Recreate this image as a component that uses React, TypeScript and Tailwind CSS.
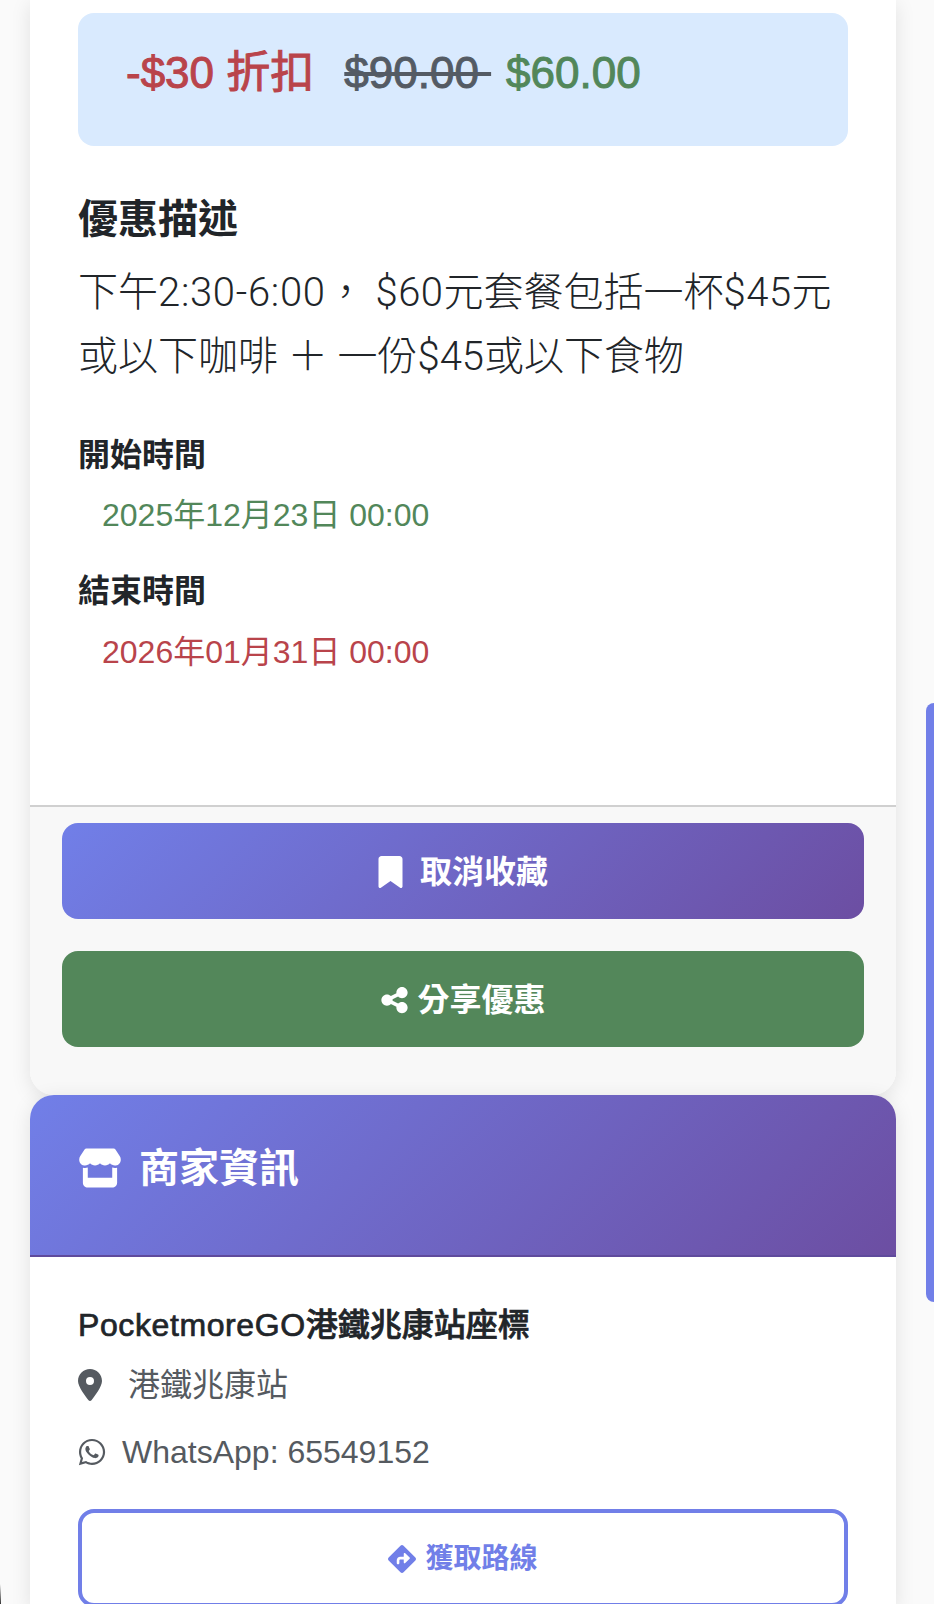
import { FaBookmark, FaDiamondTurnRight, FaLocationDot, FaShareNodes, FaStore, FaWhatsapp } from 'react-icons/fa6';

export default function App() {
  return (
    <div className="relative h-[1604px] overflow-hidden bg-[#fafafa] pr-[38px] pl-[30px] font-['Liberation_Sans','Noto_Sans_CJK_TC',sans-serif] text-[#212529]">
      {/* Deal card */}
      <div className="rounded-b-[24px] bg-white shadow-[0_4px_20px_rgba(0,0,0,0.1)]">
        <div className="px-[48px] pt-[13px] pb-[133px]">
          <div className="h-[133px] rounded-[16px] bg-[#d9eafe] pt-[28px] pl-[48px] text-[44px] leading-[64px] whitespace-nowrap [-webkit-text-stroke:1px]">
            <span className="text-[#b9444b]">-$30 折扣</span>
            <span className="ml-[30px] text-[#545b64] line-through">$90.00&nbsp;</span>
            <span className="ml-[15px] text-[#52875a]">$60.00</span>
          </div>

          <h2 className="mt-[49px] text-[40px] leading-[48px] font-bold">優惠描述</h2>
          <p className="mt-[18px] font-['Roboto','Noto_Sans_CJK_TC',sans-serif] text-[40px] leading-[64px] font-light">
            下午<span className="tracking-[0.7px]">2:30-6:00</span>， <span className="tracking-[0.5px]">$60</span>元套餐包括一杯<span className="tracking-[0.5px]">$45</span>元或以下咖啡 ＋ 一份$45或以下食物
          </p>

          <div className="mt-[46px] text-[32px] leading-[40px] font-bold">開始時間</div>
          <div className="mt-[20px] pl-[24px] text-[32px] leading-[40px] text-[#52875a]">2025年12月23日 00:00</div>
          <div className="mt-[36px] text-[32px] leading-[40px] font-bold">結束時間</div>
          <div className="mt-[21px] pl-[24px] text-[32px] leading-[40px] text-[#b9444b]">2026年01月31日 00:00</div>
        </div>

        <div className="flex flex-col gap-[32px] rounded-b-[24px] border-t-2 border-[#d0d0d0] bg-[#f8f8f8] px-[32px] pt-[16px] pb-[48px]">
          <button className="flex h-[96px] items-center justify-center gap-[17px] rounded-[16px] bg-[linear-gradient(135deg,#717fe8,#6c4ea2)] pt-[2px] text-[32px] font-bold text-white">
            <FaBookmark className="h-[32px] w-[25px]" />
            取消收藏
          </button>
          <button className="flex h-[96px] items-center justify-center gap-[8px] rounded-[16px] bg-[#53875a] pt-[2px] text-[32px] font-bold text-white">
            <FaShareNodes className="h-[30px] w-[29px]" />
            分享優惠
          </button>
        </div>
      </div>

      {/* Merchant card */}
      <div className="rounded-t-[24px] bg-white shadow-[0_4px_20px_rgba(0,0,0,0.1)]">
        <div className="flex h-[162px] items-center gap-[17px] rounded-t-[24px] border-b-2 border-[#5f4a9c] bg-[linear-gradient(135deg,#717fe8,#6c4ea2)] px-[48px] pb-[15px] text-white">
          <FaStore className="h-[40px] w-[44px]" />
          <h2 className="text-[40px] leading-[48px] font-bold">商家資訊</h2>
        </div>
        <div className="px-[48px] pt-[48px]">
          <div className="text-[32px] leading-[40px] font-medium [-webkit-text-stroke:0.7px]">
            <span className="tracking-[0.6px]">PocketmoreGO</span>港鐵兆康站座標
          </div>
          <div className="mt-[20px] flex items-center gap-[26px] text-[32px] leading-[40px] text-[#555a60]">
            <FaLocationDot className="h-[32px] w-[24px]" />
            港鐵兆康站
          </div>
          <div className="mt-[27px] flex items-center gap-[16px] text-[32px] leading-[40px] text-[#555a60]">
            <FaWhatsapp className="h-[30px] w-[28px]" />
            WhatsApp: 65549152
          </div>
          <button className="mt-[37px] flex h-[98px] w-full items-center justify-center gap-[9px] rounded-[16px] border-4 border-[#717fe8] bg-white pt-[2px] text-[28px] font-bold text-[#717fe8]">
            <FaDiamondTurnRight className="h-[28px] w-[28px]" />
            獲取路線
          </button>
        </div>
      </div>

      {/* Scrollbar thumb and the sliver of dark at the bottom edge */}
      <div className="absolute top-[703px] left-[926px] h-[599px] w-[8px] rounded-l-[8px] bg-[#717fe8]" />
      <div className="absolute bottom-0 left-0 h-[20px] w-[1px] bg-gradient-to-b from-transparent to-[#333333]" />
    </div>
  );
}
